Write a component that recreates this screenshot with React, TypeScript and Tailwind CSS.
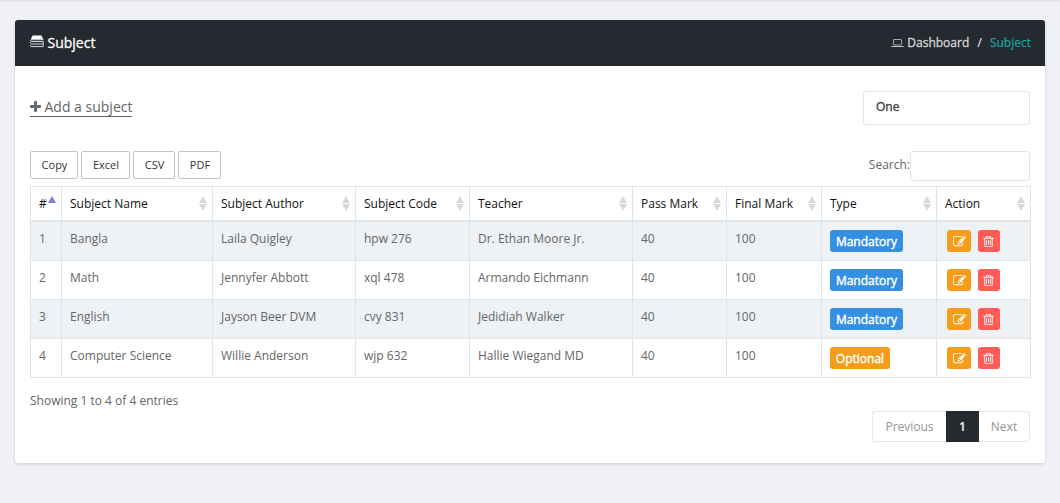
import React from "react";

type Row = [number, string, string, string, string, number, number, string];

const rows: Row[] = [
  [1, "Bangla", "Laila Quigley", "hpw 276", "Dr. Ethan Moore Jr.", 40, 100, "Mandatory"],
  [2, "Math", "Jennyfer Abbott", "xql 478", "Armando Eichmann", 40, 100, "Mandatory"],
  [3, "English", "Jayson Beer DVM", "cvy 831", "Jedidiah Walker", 40, 100, "Mandatory"],
  [4, "Computer Science", "Willie Anderson", "wjp 632", "Hallie Wiegand MD", 40, 100, "Optional"],
];

const headers = ["#", "Subject Name", "Subject Author", "Subject Code", "Teacher", "Pass Mark", "Final Mark", "Type", "Action"];

function EditIcon() {
  return (
    <svg viewBox="0 0 1792 1792" className="h-[13px] w-[13px]" fill="currentColor">
      <path d="M888 1184l116-116-152-152-116 116v56h96v96h56zm440-720q-16-16-33 1l-350 350q-17 17-1 33t33-1l350-350q17-17 1-33zm80 594v190q0 119-84.5 203.5t-203.5 84.5h-832q-119 0-203.5-84.5t-84.5-203.5v-832q0-119 84.5-203.5t203.5-84.5h832q63 0 117 25 15 7 18 23 3 17-9 29l-49 49q-14 14-32 8-23-6-45-6h-832q-66 0-113 47t-47 113v832q0 66 47 113t113 47h832q66 0 113-47t47-113v-126q0-13 9-22l64-64q15-15 35-7t20 29zm-96-738l288 288-672 672h-288v-288zm444 132l-92 92-288-288 92-92q28-28 68-28t68 28l152 152q28 28 28 68t-28 68z" />
    </svg>
  );
}

function TrashIcon() {
  return (
    <svg viewBox="0 0 1792 1792" className="h-[13px] w-[13px]" fill="currentColor">
      <path d="M704 736v576q0 14-9 23t-23 9h-64q-14 0-23-9t-9-23v-576q0-14 9-23t23-9h64q14 0 23 9t9 23zm256 0v576q0 14-9 23t-23 9h-64q-14 0-23-9t-9-23v-576q0-14 9-23t23-9h64q14 0 23 9t9 23zm256 0v576q0 14-9 23t-23 9h-64q-14 0-23-9t-9-23v-576q0-14 9-23t23-9h64q14 0 23 9t9 23zm128 724v-948h-896v948q0 22 7 40.5t14.5 27 10.5 8.5h832q3 0 10.5-8.5t14.5-27 7-40.5zm-672-1076h448l-48-117q-7-9-17-11h-317q-10 2-17 11zm928 32v64q0 14-9 23t-23 9h-96v948q0 83-47 143.5t-113 60.5h-832q-66 0-113-58.5t-47-141.5v-952h-96q-14 0-23-9t-9-23v-64q0-14 9-23t23-9h309l70-167q15-37 54-63t79-26h320q40 0 79 26t54 63l70 167h309q14 0 23 9t9 23z" />
    </svg>
  );
}

function BooksIcon() {
  return (
    <svg viewBox="0 0 14 13" className="h-[13px] w-[14px]" fill="none">
      <path d="M3.4 0.6Q2.4.6 2 1.6L.9 4.2h12.2L12 1.6Q11.6.6 10.6.6z" fill="#fff" />
      <path d="M13.5 4.7H1.2Q.5 4.7 .5 5.6T1.2 6.5H13.3M13.2 6.5V9M.5 7.5Q.5 9 1.4 9H13.3M.5 10Q.5 11.6 1.4 11.6H13.3M13.2 9V11.6" stroke="#d5d6d8" />
    </svg>
  );
}

function LaptopIcon() {
  return (
    <svg viewBox="0 0 13 10" className="h-[10px] w-[13px]" fill="none">
      <rect x="2.5" y="1.5" width="8" height="5.5" rx="0.5" stroke="#a2a4a6" />
      <path d="M0.3 8.5h12.4" stroke="#c0c1c3" />
    </svg>
  );
}

function SortIcon() {
  return (
    <svg viewBox="0 0 8 15" className="h-[15px] w-2" fill="#d8d8d8">
      <path d="M4 0l4 7H0zM0 8h8l-4 7z" />
    </svg>
  );
}

export default function App() {
  return (
    <div className="h-[503px] w-[1060px] overflow-hidden bg-[#f0f1f6] font-['Open_Sans','Noto_Sans',sans-serif] text-[12px] text-[#666]">
      <div className="h-[2px] bg-[#e2e3e8]" />
      <main className="mx-[15px] mt-[18px] h-[443px] rounded-[3px] bg-white shadow-[0_1px_3px_rgba(0,0,0,0.15)]">
        <header className="flex h-[46px] items-center justify-between rounded-t-[3px] bg-[#252930] pr-[14px] pl-[15px]">
          <h1 className="flex items-center gap-[3.5px] text-[14px] leading-5 font-medium text-white [-webkit-text-stroke:0.3px_currentColor]">
            <span className="-mt-1"><BooksIcon /></span>
            Subject
          </h1>
          <nav className="flex items-center text-[12px] leading-5 text-[#d6d6d6]">
            <LaptopIcon />
            <span className="ml-[3px] font-medium [-webkit-text-stroke:0.3px_currentColor]">Dashboard</span>
            <span className="mx-2 font-semibold">/</span>
            <span className="text-[#17a79c] [-webkit-text-stroke:0.2px_currentColor]">Subject</span>
          </nav>
        </header>
        <div className="px-[15px]">
          <div className="flex h-[59px] items-start justify-between pt-[25px]">
            <a className="mt-[5px] flex h-[21px] items-center gap-[3.5px] border-b border-[#666] text-[14px] whitespace-nowrap">
              <svg viewBox="0 0 11 11" className="h-[11px] w-[11px]" fill="#666a70">
                <path d="M4 1q0-1 1-1h1q1 0 1 1v3h3q1 0 1 1v1q0 1-1 1H7v3q0 1-1 1H5q-1 0-1-1V7H1Q0 7 0 6V5q0-1 1-1h3z" />
              </svg>
              Add a subject
            </a>
            <div className="h-[34px] w-[167px] rounded-[3px] border border-[#e2e5e9] pl-3 text-[12px] leading-[30px] font-medium text-[#444] [-webkit-text-stroke:0.4px_currentColor]">One</div>
          </div>
          <div className="mt-[26px] flex h-[35px] items-start justify-between">
            <div className="flex gap-[3px] text-[11px] text-[#333]">
              <button className="h-7 w-[48px] rounded-[2px] border border-[#c4c4c4] pl-px">Copy</button>
              <button className="h-7 w-[49px] rounded-[2px] border border-[#c4c4c4] pl-px">Excel</button>
              <button className="h-7 w-[42px] rounded-[2px] border border-[#c4c4c4] pl-px">CSV</button>
              <button className="h-7 w-[43px] rounded-[2px] border border-[#c4c4c4] pl-px">PDF</button>
            </div>
            <label className="flex leading-[27px]">
              Search:
              <input className="h-[30px] w-[120px] rounded-[3px] border border-[#e0e4e8]" />
            </label>
          </div>
          <table className="w-[1001px] table-fixed border-separate border-spacing-0 border-t border-l border-[#dfe5e9] text-[12px]">
            <colgroup>
              <col className="w-[31px]" /><col className="w-[151px]" /><col className="w-[143px]" />
              <col className="w-[114px]" /><col className="w-[163px]" /><col className="w-[94px]" />
              <col className="w-[95px]" /><col className="w-[115px]" /><col className="w-[94px]" />
            </colgroup>
            <thead>
              <tr className="h-[35px] text-[#111]">
                {headers.map((h, i) => (
                  <th key={h} className="border-r border-b-2 border-[#dfe5e9] py-0 pr-[5px] pl-2 text-left font-normal">
                    <div className="flex items-center justify-between">
                      <span className="whitespace-nowrap">{h}</span>
                      {i === 0 ? (
                        <svg viewBox="0 0 8 7" className="mb-2 h-[7px] w-2" fill="#7d7fdc"><path d="M4 0l4 7H0z" /></svg>
                      ) : (
                        <SortIcon />
                      )}
                    </div>
                  </th>
                ))}
              </tr>
            </thead>
            <tbody>
              {rows.map((r) => (
                <tr key={r[0]} className="h-[39px] odd:bg-[#eef2f5]">
                  {r.slice(0, 7).map((c, i) => (
                    <td key={i} className="border-r border-b border-[#dfe5e9] py-0 pb-[5px] pl-2 whitespace-nowrap">{c}</td>
                  ))}
                  <td className="border-r border-b border-[#dfe5e9] p-0 pl-2">
                    <span className={`flex h-[22px] items-center justify-center rounded-[3px] pt-[2px] text-[12px] font-medium text-white [-webkit-text-stroke:0.4px_currentColor] ${r[7] === "Mandatory" ? "w-[73px] bg-[#358fe2]" : "w-[60px] bg-[#f59c1a]"}`}>{r[7]}</span>
                  </td>
                  <td className="border-r border-b border-[#dfe5e9] p-0 pl-[10px]">
                    <div className="flex gap-[7px] text-white">
                      <button className="flex h-[22px] w-6 items-center justify-center rounded-[3px] bg-[#f59c1a] pt-px"><EditIcon /></button>
                      <button className="flex h-[22px] w-[22px] items-center justify-center rounded-[3px] bg-[#ff5b57] pt-px pr-px"><TrashIcon /></button>
                    </div>
                  </td>
                </tr>
              ))}
            </tbody>
          </table>
          <p className="mt-[13px] text-[12px] leading-5">Showing 1 to 4 of 4 entries</p>
          <div className="ml-auto flex h-[31px] w-[158px] text-[12px] leading-[29px] text-[#949494]">
            <span className="w-[74px] rounded-l-[4px] border border-r-0 border-[#e2e7eb] text-center">Previous</span>
            <span className="w-[33px] border border-[#252930] bg-[#252930] text-center font-semibold text-white">1</span>
            <span className="w-[51px] rounded-r-[4px] border border-l-0 border-[#e2e7eb] text-center">Next</span>
          </div>
        </div>
      </main>
    </div>
  );
}
